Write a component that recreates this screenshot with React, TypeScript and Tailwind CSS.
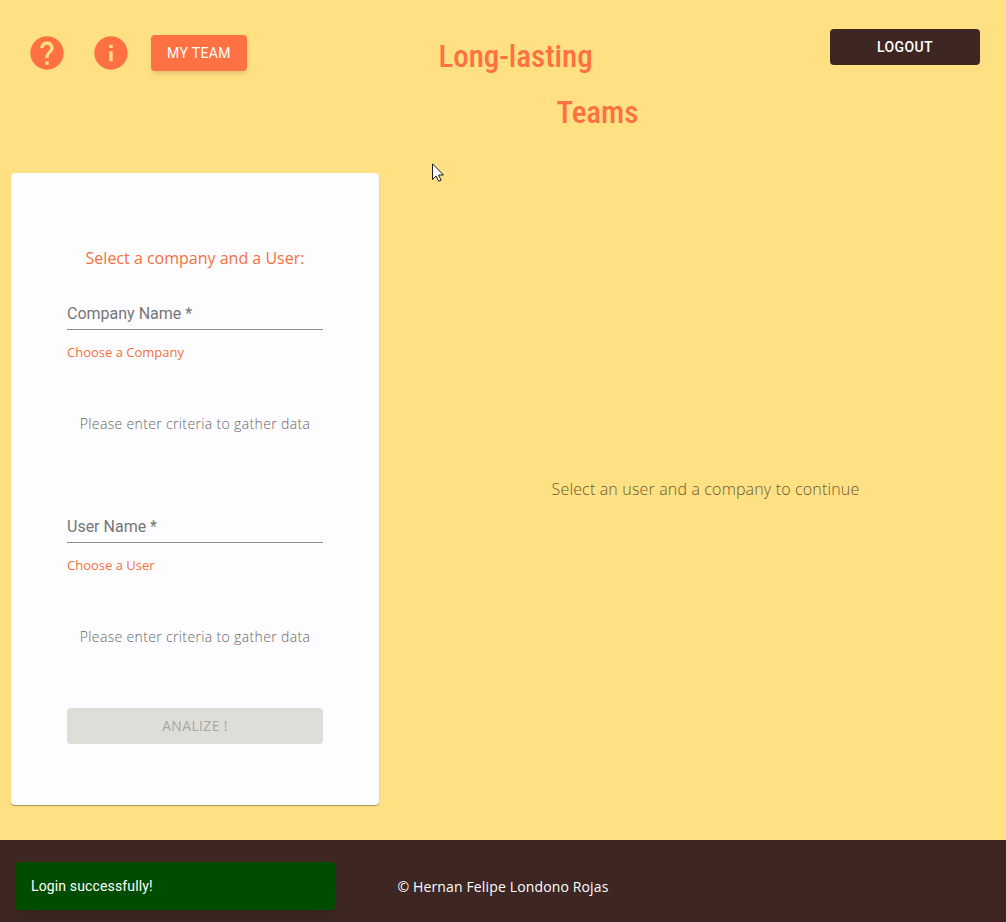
import { useState } from "react";

function HelpIcon() {
  return (
    <svg viewBox="0 0 24 24" className="size-10" fill="currentColor" aria-hidden="true">
      <path d="M12 2C6.48 2 2 6.48 2 12s4.48 10 10 10 10-4.48 10-10S17.52 2 12 2zm1 17h-2v-2h2v2zm2.070-7.750-.9.920C13.450 12.900 13 13.500 13 15h-2v-.5c0-1.100.450-2.100 1.170-2.830l1.240-1.260c.370-.360.590-.860.590-1.410 0-1.100-.9-2-2-2s-2 .9-2 2H8c0-2.210 1.790-4 4-4s4 1.790 4 4c0 .880-.360 1.680-.930 2.250z" />
    </svg>
  );
}

function InfoIcon() {
  return (
    <svg viewBox="0 0 24 24" className="size-10" fill="currentColor" aria-hidden="true">
      <path d="M12 2C6.48 2 2 6.48 2 12s4.48 10 10 10 10-4.48 10-10S17.52 2 12 2zm1 15h-2v-6h2v6zm0-8h-2V7h2v2z" />
    </svg>
  );
}

function Pointer() {
  return (
    <svg
      viewBox="0 0 12 19"
      width="12"
      height="19"
      className="pointer-events-none absolute top-[163px] left-[432px]"
      aria-hidden="true"
    >
      <path
        d="M.5.8v15.700l3.700-3.500 2.500 5.300 2.400-1.100-2.500-5.200h4.900z"
        fill="#fff"
        stroke="#1b1b1b"
      />
    </svg>
  );
}

type PickerProps = { id: string; label: string; hint: string };

function Picker({ id, label, hint }: PickerProps) {
  const [value, setValue] = useState("");
  return (
    <div className="flex flex-col">
      <div className="relative">
        <input
          id={id}
          required
          value={value}
          onChange={(e) => setValue(e.target.value)}
          placeholder=" "
          className="peer block h-8 w-full border-b border-[#8b8b80] bg-transparent font-[Roboto,sans-serif] text-base outline-none focus:border-[#ff7043]"
        />
        <label
          htmlFor={id}
          className="pointer-events-none absolute top-1 left-0 hidden font-[Roboto,sans-serif] text-base text-[#757575] peer-placeholder-shown:block"
        >
          {label} *
        </label>
      </div>
      <p className="mt-3 text-[13px] leading-5 font-medium text-[#f4703c]">{hint}</p>
      <p className="mt-[52px] text-center text-sm leading-5 font-light tracking-wide text-[#666]">
        Please enter criteria to gather data
      </p>
    </div>
  );
}

export default function App() {
  return (
    <div className="relative flex min-h-screen flex-col bg-[#ffe082] font-['Open_Sans',sans-serif]">
      <header className="flex items-start justify-between pt-[29px] pr-[26px] pl-[27px]">
        <nav className="flex items-center gap-6 pt-1 text-[#ff7043]">
          <button aria-label="Help"><HelpIcon /></button>
          <button aria-label="Information"><InfoIcon /></button>
          <button className="-ml-1 h-9 rounded bg-[#ff7043] px-4 font-[Roboto,sans-serif] text-sm tracking-wide text-white shadow-md">
            MY TEAM
          </button>
        </nav>
        <h1 className="flex h-[144px] w-[200px] flex-col font-['Roboto_Condensed',cursive] text-[31px] leading-[56px] font-medium text-[#ff7043]">
          <span>Long-lasting</span>
          <span className="text-right">Teams</span>
        </h1>
        <button className="h-9 w-[150px] rounded bg-[#3e2723] font-[Roboto,sans-serif] text-sm font-medium tracking-wide text-white">
          LOGOUT
        </button>
      </header>

      <main className="flex flex-1 px-[11px] pb-[35px]">
        <section className="w-[368px] rounded bg-[#fdfdff] px-14 pt-[73px] pb-[61px] shadow-[0_1px_1px_rgba(0,0,0,0.35)]">
          <h2 className="mb-7 text-center text-base leading-6 font-medium text-[#f4703c]">
            Select a company and a User:
          </h2>
          <form onSubmit={(e) => e.preventDefault()}>
            <div className="mb-[61px] flex flex-col gap-[77px]">
              <Picker id="company" label="Company Name" hint="Choose a Company" />
              <Picker id="user" label="User Name" hint="Choose a User" />
            </div>
            <button
              disabled
              className="h-9 w-full rounded bg-[#deded8] text-sm tracking-wide text-[#a6a6a6]"
            >
              ANALIZE !
            </button>
          </form>
        </section>
        <section className="flex flex-1 items-center justify-center pl-[37px]">
          <p className="text-base font-light tracking-[0.01em] text-[#6b5b34]">
            Select an user and a company to continue
          </p>
        </section>
      </main>

      <footer className="flex h-[82px] items-center justify-center bg-[#3e2723] pt-3 text-sm tracking-[0.01em] text-white">
        © Hernan Felipe Londono Rojas
      </footer>
      <div
        role="status"
        className="absolute bottom-3 left-[15px] flex h-12 w-80 items-center rounded bg-[#004d00] px-4 font-[Roboto,sans-serif] text-sm tracking-[0.01em] text-white shadow-lg"
      >
        Login successfully!
      </div>
      <Pointer />
    </div>
  );
}
